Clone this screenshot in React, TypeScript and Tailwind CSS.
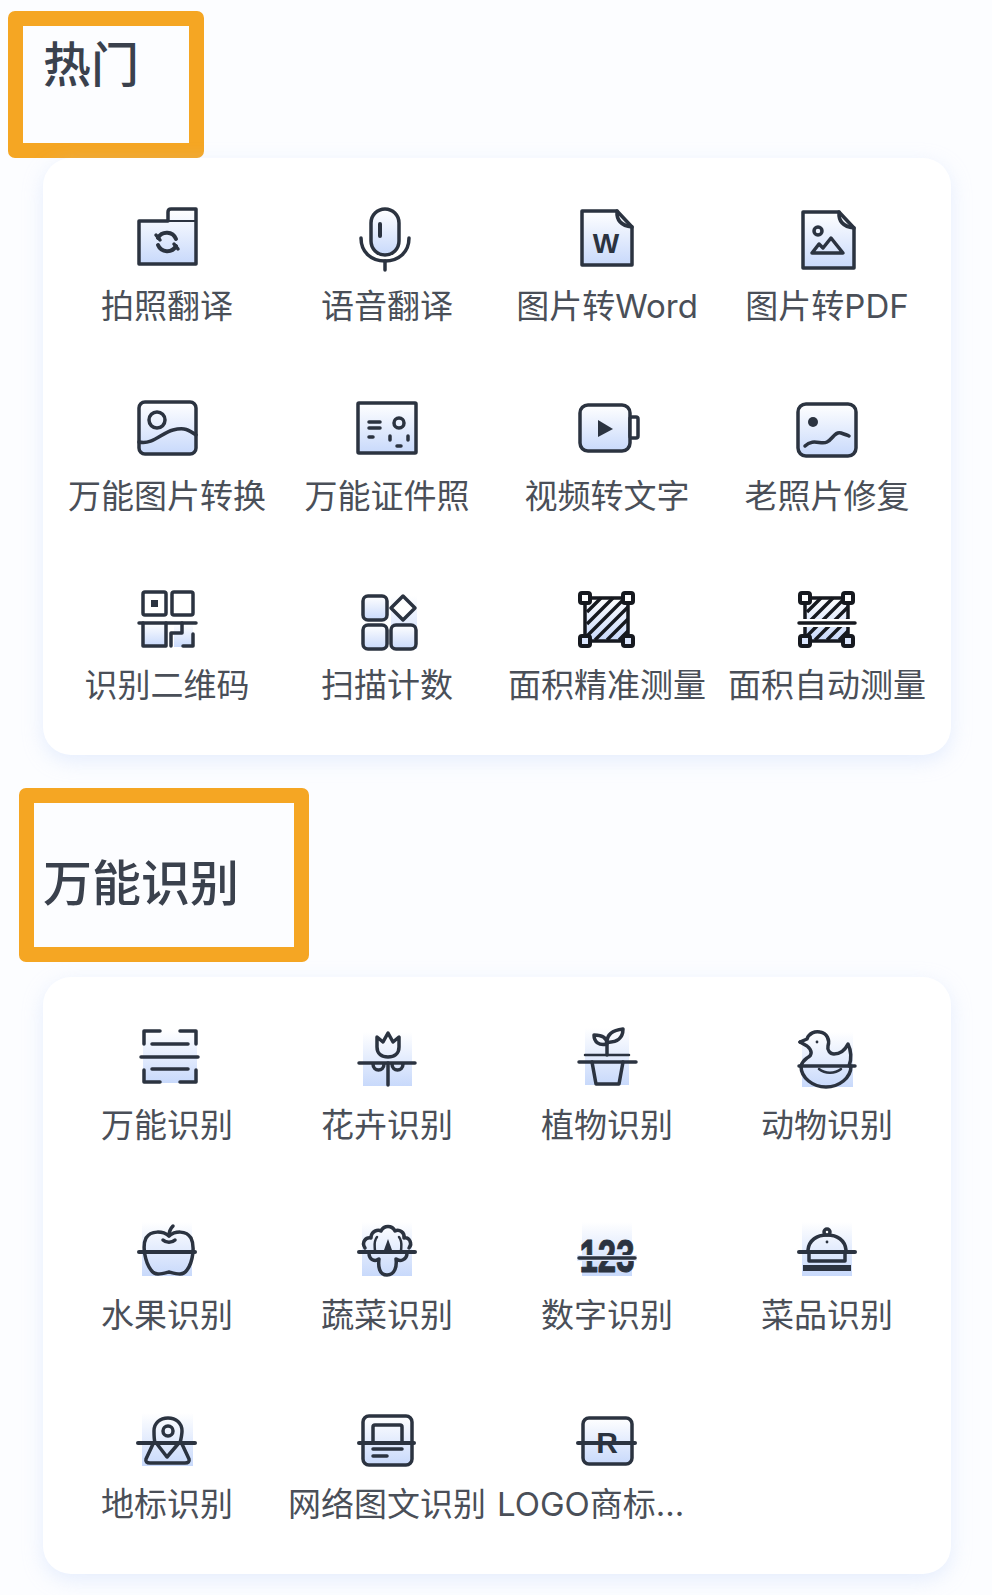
import type { ReactNode } from "react";

type Item = { label: string; icon: ReactNode };

const G = "url(#fade)";
const DARK = "#2b3340";

const Icon = ({ children }: { children: ReactNode }) => (
  <svg
    viewBox="0 0 72 72"
    className="w-[72px] h-[72px] shrink-0 overflow-visible"
    fill="none"
    stroke={DARK}
    strokeWidth={3.5}
    strokeLinecap="round"
    strokeLinejoin="round"
  >
    {children}
  </svg>
);

const Bg = ({ x = 11, y = 10, w = 50, h = 54 }: { x?: number; y?: number; w?: number; h?: number }) => (
  <rect x={x} y={y} width={w} height={h} fill={G} stroke="none" />
);

const hatch = (
  <g stroke="#16191f" strokeWidth={3.4} strokeLinecap="butt">
    <path d="M16 30 30 16M16 42 42 16M16 54 54 16M24 58 57 25M36 58 57 37M48 58 57 49" />
  </g>
);

const corners = (
  <g stroke="#16191f" strokeWidth={4}>
    <rect x="9" y="11" width="10" height="10" rx="2" fill="#fff" />
    <rect x="52" y="11" width="10" height="10" rx="2" fill="#fff" />
    <rect x="9" y="54" width="10" height="10" rx="2" fill="#dbe6fd" />
    <rect x="52" y="54" width="10" height="10" rx="2" fill="#dbe6fd" />
  </g>
);

const hot: Item[] = [
  {
    label: "拍照翻译",
    icon: (
      <Icon>
        <path d="M8 18H37V9Q37 6 40 6H65V61H8Z" fill={G} />
        <path d="M37 18H65" strokeWidth={2} />
        <path d="M27 35A10 10 0 0 1 45 36M45 43A10 10 0 0 1 27 42" strokeWidth={4} />
        <path d="M25 32 29 37M47 46 43 41" />
      </Icon>
    ),
  },
  {
    label: "语音翻译",
    icon: (
      <Icon>
        <rect x="20" y="6" width="28" height="46" rx="14" fill={G} />
        <path d="M29 21V33" strokeWidth={4} />
        <path d="M10 35C10 49 20 58 34 58S58 49 58 35" />
        <path d="M34 58V67" />
      </Icon>
    ),
  },
  {
    label: "图片转Word",
    icon: (
      <Icon>
        <path d="M11 8H46L61 24V62H11Z" fill={G} />
        <path d="M46 8Q45 22 61 24" />
        <text x="35" y="50" textAnchor="middle" fontFamily="'Liberation Sans', sans-serif" fontWeight="700" fontSize="28" fill={DARK} stroke="none">
          W
        </text>
      </Icon>
    ),
  },
  {
    label: "图片转PDF",
    icon: (
      <Icon>
        <path d="M12 9H48L63 25V65H12Z" fill={G} />
        <path d="M48 9Q47 23 63 25" />
        <circle cx="27" cy="28" r="4" />
        <path d="M21 50 28 41 32 45 40 35 52 50Z" />
      </Icon>
    ),
  },
  {
    label: "万能图片转换",
    icon: (
      <Icon>
        <rect x="8" y="9" width="57" height="52" rx="6" fill={G} />
        <circle cx="26" cy="27" r="8" />
        <path d="M8 49C22 52 30 40 42 37S58 37 65 42" />
      </Icon>
    ),
  },
  {
    label: "万能证件照",
    icon: (
      <Icon>
        <rect x="7" y="10" width="58" height="50" rx="1" fill={G} />
        <path d="M18 29H29M18 35H29M18 44H22" />
        <circle cx="48" cy="30" r="5" />
        <path d="M39 43V47M57 43V47M46 53H50" />
      </Icon>
    ),
  },
  {
    label: "视频转文字",
    icon: (
      <Icon>
        <rect x="9" y="12" width="50" height="46" rx="8" fill={G} />
        <rect x="59" y="24" width="8" height="21" rx="2" fill="#fff" />
        <path d="M27 27 42 36 27 44Z" fill={DARK} stroke="none" />
      </Icon>
    ),
  },
  {
    label: "老照片修复",
    icon: (
      <Icon>
        <rect x="7" y="11" width="58" height="52" rx="8" fill={G} />
        <circle cx="22" cy="29" r="5" fill={DARK} stroke="none" />
        <path d="M14 53C22 45 30 52 36 49S44 38 50 40 56 42 58 43" />
      </Icon>
    ),
  },
  {
    label: "识别二维码",
    icon: (
      <Icon>
        <rect x="43" y="42" width="19" height="23" fill={G} stroke="none" />
        <rect x="12" y="10" width="23" height="23" rx="2" fill="#fff" />
        <rect x="20" y="18" width="7" height="7" fill={DARK} stroke="none" />
        <rect x="41" y="10" width="21" height="23" rx="2" fill="#fff" />
        <path d="M12 41V64H35V41" fill={G} />
        <path d="M8 41H65" />
        <path d="M40 64V51H51V41M62 52V64H52" />
      </Icon>
    ),
  },
  {
    label: "扫描计数",
    icon: (
      <Icon>
        <rect x="40" y="14" width="26" height="53" fill={G} stroke="none" />
        <rect x="12" y="14" width="24" height="24" rx="5" fill={G} />
        <rect x="12" y="43" width="24" height="24" rx="5" fill={G} />
        <rect x="40" y="43" width="25" height="24" rx="5" fill={G} />
        <path d="M52 14 64 26 52 38 40 26Z" fill="#fff" />
      </Icon>
    ),
  },
  {
    label: "面积精准测量",
    icon: (
      <Icon>
        <rect x="14" y="16" width="43" height="43" fill={G} stroke="#16191f" />
        {hatch}
        {corners}
      </Icon>
    ),
  },
  {
    label: "面积自动测量",
    icon: (
      <Icon>
        <rect x="14" y="16" width="43" height="43" fill={G} stroke="#16191f" />
        {hatch}
        <rect x="6" y="37" width="60" height="8" fill="#fff" stroke="none" />
        <path d="M8 41H64" stroke="#16191f" />
        {corners}
      </Icon>
    ),
  },
];

const recog: Item[] = [
  {
    label: "万能识别",
    icon: (
      <Icon>
        <Bg x={12} y={8} w={54} h={53} />
        <path d="M13 22V9H29M49 9H65V22M13 48V60H29M49 60H65V48" />
        <path d="M21 22H57M21 47H57" />
        <path d="M10 35H67" />
      </Icon>
    ),
  },
  {
    label: "花卉识别",
    icon: (
      <Icon>
        <Bg x={12} y={10} w={49} h={54} />
        <path d="M26 15 32 20 37 11 42 20 48 15V25C48 32 43 35 37 35S26 32 26 25Z" />
        <path d="M22 42C22 50 33 50 33 42M41 42C41 50 52 50 52 42" />
        <path d="M37 41V63" />
        <path d="M8 41H64" />
      </Icon>
    ),
  },
  {
    label: "植物识别",
    icon: (
      <Icon>
        <Bg x={14} y={6} w={44} h={57} />
        <path d="M36 33V20" />
        <path d="M36 22C36 15 30 13 23 13 23 20 28 24 36 22ZM36 20C36 12 43 8 52 7 52 16 46 21 36 20Z" />
        <path d="M14 33H58" strokeWidth={2.5} />
        <path d="M8 40H65" />
        <path d="M21 40 25 62H48L52 40" />
      </Icon>
    ),
  },
  {
    label: "动物识别",
    icon: (
      <Icon>
        <Bg x={11} y={10} w={51} h={55} />
        <path d="M9 20 16 17C18 11 24 9 29 10 36 11 39 18 37 24 36 28 39 32 43 32 49 32 54 28 57 22 60 28 61 37 58 44" />
        <path d="M16 24 9 20M16 24C21 28 22 33 16 36 13 38 11 41 10 44" />
        <path d="M10 44C10 56 22 65 35 65S60 56 60 44" />
        <path d="M28 47C34 52 44 52 50 47" strokeWidth={2.5} />
        <circle cx="26" cy="20" r="1.4" fill={DARK} stroke="none" />
        <path d="M8 44H64" />
      </Icon>
    ),
  },
  {
    label: "水果识别",
    icon: (
      <Icon>
        <Bg />
        <path d="M38 24C32 19 20 18 15 26 11 34 14 50 20 58 24 64 30 62 38 60 46 62 52 64 56 58 62 50 64 34 60 26 55 18 44 19 38 24Z" />
        <path d="M38 24C38 20 39 17 42 14M32 28C35 31 41 31 44 28" />
        <path d="M8 40H64" strokeWidth={4} />
      </Icon>
    ),
  },
  {
    label: "蔬菜识别",
    icon: (
      <Icon>
        <Bg />
        <path d="M14 36C10 30 15 25 20 26 20 19 27 17 30 19 33 13 41 13 44 19 48 17 54 20 53 26 58 25 62 31 58 36" />
        <path d="M24 40C24 34 22 30 26 25M50 40C50 34 52 30 48 25" strokeWidth={2.5} />
        <path d="M37 27 33 38H41Z" fill={DARK} stroke="none" />
        <path d="M18 41C18 48 24 50 28 47 27 54 28 63 36 63S46 54 45 47C49 50 56 48 56 41" />
        <path d="M8 40H64" strokeWidth={4} />
      </Icon>
    ),
  },
  {
    label: "数字识别",
    icon: (
      <Icon>
        <Bg />
        <text x="36" y="60" textAnchor="middle" textLength={55} lengthAdjust="spacingAndGlyphs" fontFamily="'Liberation Sans', sans-serif" fontWeight="700" fontSize="46" fill={DARK} stroke={DARK} strokeWidth={1}>
          123
        </text>
        <rect x="6" y="43" width="60" height="6" fill="#e4ecfd" stroke="none" />
        <path d="M8 46H64" />
      </Icon>
    ),
  },
  {
    label: "菜品识别",
    icon: (
      <Icon>
        <Bg />
        <path d="M17 38C18 28 26 23 36 23S54 28 55 38" />
        <circle cx="36" cy="20" r="3" fill="#fff" />
        <circle cx="36" cy="30" r="1.4" fill={DARK} stroke="none" />
        <path d="M8 40H64" strokeWidth={4} />
        <path d="M18 42V49H54V42" />
        <path d="M12 56H60" strokeWidth={6} strokeLinecap="butt" />
      </Icon>
    ),
  },
  {
    label: "地标识别",
    icon: (
      <Icon>
        <Bg x={11} y={12} w={51} h={53} />
        <path d="M24 42C23 38 23 34 23 30 23 22 29 17 37 17S51 22 51 30C51 34 50 38 49 42" />
        <circle cx="37" cy="30" r="5" />
        <path d="M26 43 36 56 47 43" />
        <path d="M22 43 15 58Q14 62 19 62H54Q59 62 58 58L51 43" />
        <path d="M7 42H64" strokeWidth={4} />
      </Icon>
    ),
  },
  {
    label: "网络图文识别",
    icon: (
      <Icon>
        <rect x="12" y="15" width="49" height="49" rx="6" fill={G} />
        <path d="M22 42V26Q22 24 24 24H49Q51 24 51 26V42" />
        <path d="M22 48H51M22 55H36" />
        <path d="M8 42H63" strokeWidth={4} />
      </Icon>
    ),
  },
  {
    label: "LOGO商标识别",
    icon: (
      <Icon>
        <rect x="12" y="17" width="49" height="46" rx="6" fill={G} />
        <text x="36" y="52" textAnchor="middle" fontFamily="'Liberation Sans', sans-serif" fontWeight="700" fontSize="30" fill={DARK} stroke="none">
          R
        </text>
        <path d="M7 42H64" strokeWidth={4} />
      </Icon>
    ),
  },
];

const Card = ({ items }: { items: Item[] }) => (
  <div className="ml-[43px] w-[908px] h-[597px] p-[14px] bg-white rounded-[28px] shadow-[0_6px_20px_rgba(190,210,250,0.35)] grid grid-cols-4 auto-rows-[189.6px]">
    {items.map((item) => (
      <div key={item.label} className="flex flex-col items-center pt-[31px] min-w-0">
        {item.icon}
        <div className="mt-[8px] w-full text-center truncate text-[33px] leading-[46px] text-[#4a4f58]">
          {item.label}
        </div>
      </div>
    ))}
  </div>
);

export default function App() {
  return (
    <div className="w-[992px] h-[1595px] overflow-hidden pt-[11px] bg-[#fcfdff] font-['Inter','Noto_Sans_CJK_SC',sans-serif]">
      <svg className="absolute w-0 h-0">
        <defs>
          <linearGradient id="fade" x1="0" y1="0" x2="0" y2="1">
            <stop offset="0" stopColor="#ffffff" />
            <stop offset="1" stopColor="#c8d9fb" />
          </linearGradient>
        </defs>
      </svg>

      <div className="ml-[8px] w-[196px] h-[147px] pl-[20px] pt-[9px] border-[15px] border-[#f5a623] rounded-[7px] text-[48px] font-medium leading-[60px] text-[#3a414d]">
        热门
      </div>
      <Card items={hot} />

      <div className="mt-[33px] ml-[19px] w-[290px] h-[174px] pl-[9px] pt-[51px] border-[15px] border-[#f5a623] rounded-[7px] text-[49px] font-medium leading-[60px] text-[#3a414d]">
        万能识别
      </div>
      <div className="mt-[15px]">
        <Card items={recog} />
      </div>
    </div>
  );
}
